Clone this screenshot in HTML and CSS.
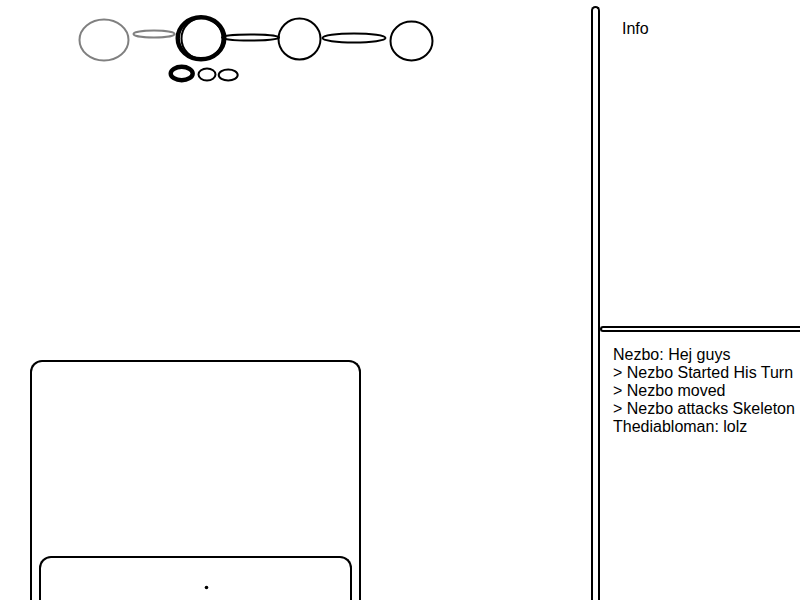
FILE: index.html
```
<!DOCTYPE html>
<html lang="en">
<head>
<meta charset="utf-8">
<title>Game</title>
<link rel="stylesheet" href="styles.css">
</head>
<body>
<div class="game">
  <main class="board">
    <svg class="turns" width="440" height="90" viewBox="0 0 440 90" aria-hidden="true">
      <g class="past">
        <ellipse cx="104" cy="40" rx="24.5" ry="20.5"/>
        <ellipse cx="154" cy="34" rx="20.5" ry="3.5"/>
      </g>
      <ellipse class="active" cx="201" cy="38.3" rx="23.3" ry="21"/>
      <ellipse cx="202" cy="38.5" rx="20.5" ry="20.5"/>
      <ellipse cx="250.5" cy="37.5" rx="28.5" ry="3"/>
      <ellipse cx="299.5" cy="39" rx="21" ry="20.5"/>
      <ellipse cx="354" cy="38" rx="31.5" ry="4.5"/>
      <ellipse cx="411.5" cy="41" rx="21" ry="19.5"/>
      <ellipse class="active" cx="181.7" cy="73.5" rx="11" ry="6.7"/>
      <ellipse cx="207" cy="74.5" rx="8.5" ry="6"/>
      <ellipse cx="228.2" cy="75" rx="9.5" ry="5.5"/>
    </svg>
    <section class="panel">
      <div class="tray">
        <svg width="5" height="5" viewBox="0 0 5 5" aria-hidden="true">
          <circle class="dot" cx="2.5" cy="2.5" r="1.8"/>
        </svg>
      </div>
    </section>
  </main>
  <div class="divider"></div>
  <aside class="side">
    <section class="info">Info</section>
    <div class="split"></div>
    <section class="log">
      <p>Nezbo: Hej guys</p>
      <p>&gt; Nezbo Started His Turn</p>
      <p>&gt; Nezbo moved</p>
      <p>&gt; Nezbo attacks Skeleton</p>
      <p>Thediabloman: lolz</p>
    </section>
  </aside>
</div>
</body>
</html>
```
FILE: styles.css
```
* {
  box-sizing: border-box;
}

body {
  margin: 0;
  background: #fff;
  color: #000;
  font: 16px/18px "Liberation Sans", Arial, sans-serif;
}

.game {
  display: grid;
  grid-template-columns: 1fr 9px 200px;
  height: 100vh;
  overflow: hidden;
}

.board {
  display: flex;
  flex-direction: column;
  justify-content: space-between;
  min-width: 0;
}

.turns {
  display: block;
  fill: none;
  stroke: #000;
  stroke-width: 2;
}

.past {
  stroke: #808080;
}

.turns .active {
  stroke-width: 4.4;
}

.panel {
  display: flex;
  flex-direction: column;
  justify-content: flex-end;
  width: 56%;
  height: 40%;
  margin-left: 30px;
  padding: 0 7px;
  border: 2px solid #000;
  border-bottom: 0;
  border-radius: 12px 12px 0 0;
}

.tray {
  display: flex;
  justify-content: center;
  height: 44px;
  padding: 27px 0 0 22px;
  border: 2px solid #000;
  border-bottom: 0;
  border-radius: 12px 12px 0 0;
}

.dot {
  fill: #000;
}

.divider {
  margin-top: 6px;
  border: 2px solid #000;
  border-bottom: 0;
  border-radius: 5px 5px 0 0;
}

.side {
  display: flex;
  flex-direction: column;
  min-width: 0;
}

.info {
  height: 326px;
  padding: 20px 22px;
}

.split {
  height: 6px;
  border: 2px solid #000;
  border-right: 0;
  border-radius: 3px 0 0 3px;
}

.log {
  padding: 14px 0 0 13px;
  white-space: nowrap;
}

.log p {
  margin: 0;
}
```
